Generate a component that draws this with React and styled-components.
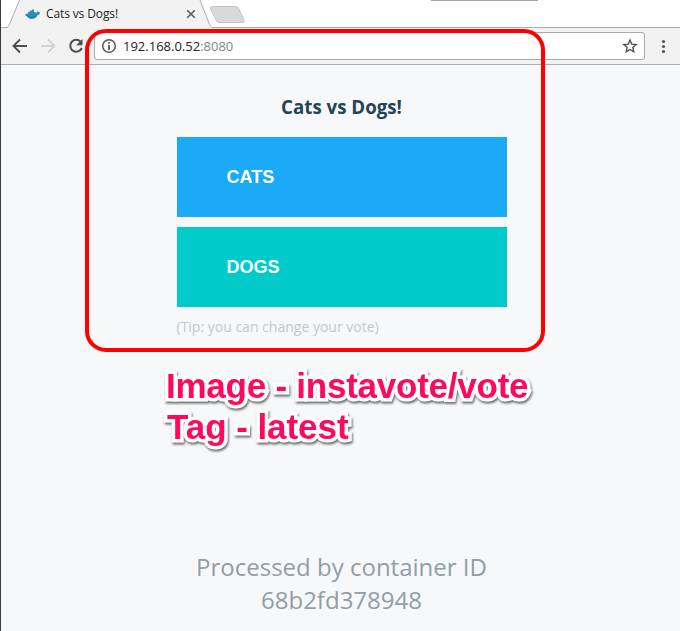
import React from 'react';
import styled, { createGlobalStyle } from 'styled-components';

const GlobalStyle = createGlobalStyle`
  * { box-sizing: border-box; }
  html, body { margin: 0; padding: 0; background: #f7f8f9; overflow: hidden; }
`;

const Window = styled.div`
  position: relative;
  width: 680px;
  height: 631px;
  display: flex;
  flex-direction: column;
  border-left: 1px solid #3c3c3c;
  background: #f7f8f9;
  overflow: hidden;
`;

const TabStrip = styled.header`
  position: relative;
  height: 28px;
  flex: none;
  display: flex;
  padding-left: 24px;
  background: #fff;
`;

const StripShapes = styled.svg`
  position: absolute;
  left: 0;
  top: 0;
`;

const Tab = styled.div`
  position: relative;
  width: 171px;
  height: 28px;
  display: flex;
  align-items: center;
`;

const TabTitle = styled.span`
  flex: 1;
  margin-left: 6px;
  font: 12px/16px 'Open Sans', sans-serif;
  letter-spacing: -0.12px;
  color: #222;
`;

const Toolbar = styled.nav`
  height: 37px;
  flex: none;
  display: flex;
  align-items: center;
  padding-left: 10px;
  background: #f2f2f2;
  border-bottom: 1px solid #adb0b2;
`;

const NavIcon = styled.svg`
  flex: none;
  width: 18px;
  height: 18px;
  margin-right: ${(p) => p.$gap || 0}px;
`;

const AddressBar = styled.div`
  width: 551px;
  height: 28px;
  flex: none;
  display: flex;
  align-items: center;
  padding: 0 6px;
  margin-right: 9px;
  background: #fff;
  border: 1px solid #a9a9a9;
  border-radius: 3px;
`;

const Address = styled.span`
  flex: 1;
  margin-left: 6px;
  font: 13px/18px 'Open Sans', sans-serif;
  color: #222;
`;

const Port = styled.span`
  color: #858585;
`;

const Page = styled.main`
  flex: 1;
  display: flex;
  flex-direction: column;
  align-items: center;
  padding: 27px 0 0 2px;
`;

const Heading = styled.h1`
  margin: 0 0 15px;
  font: 700 18.7px/30px 'Open Sans', sans-serif;
  color: #254356;
`;

const Choices = styled.div`
  width: 330px;
  display: flex;
  flex-direction: column;
  gap: 10px;
`;

const VoteButton = styled.button`
  height: 80px;
  padding: 0 0 0 50px;
  border: 0;
  background: ${(p) => p.$color};
  color: #fff;
  text-align: left;
  font: 700 18px/20px 'Liberation Sans', Arial, sans-serif;
`;

const Tip = styled.p`
  width: 330px;
  margin: 10px 0 0;
  font: 14px/20px 'Open Sans', sans-serif;
  color: #c0c9ce;
`;

const Hostname = styled.footer`
  margin-top: auto;
  margin-bottom: 15px;
  text-align: center;
  font: 24px/33px 'Open Sans', sans-serif;
  color: #8f9ea8;
`;

const Highlight = styled.div`
  position: absolute;
  left: 84px;
  top: 29px;
  width: 460px;
  height: 323px;
  border: 4px solid #f00;
  border-radius: 21px;
  pointer-events: none;
`;

const Note = styled.div`
  position: absolute;
  left: 165px;
  top: 365px;
  font: 700 35px/41px 'Liberation Sans', Arial, sans-serif;
  color: #ff0a5b;
  white-space: nowrap;
  -webkit-text-stroke: 7px #fff;
  paint-order: stroke fill;
  stroke-linejoin: round;
  filter: drop-shadow(1px 2px 1.2px rgba(0, 0, 0, 0.55));
`;

const NoteLine = styled.div`
  padding-left: ${(p) => p.$indent || 0}px;
  letter-spacing: ${(p) => p.$spacing || 0}px;
`;

export default function App() {
  return (
    <Window>
      <GlobalStyle />
      <TabStrip>
        <StripShapes width="679" height="28">
          <path d="M0 27.5H679" stroke="#a9adb0" />
          <path d="M6.5 28 C8 27 8 26 9 23 L18.5 0 H199 L208 23 C209 26 209 27.5 212 27.5 V28 Z" fill="#f2f2f2" />
          <path d="M0 27.5 H5 C7.5 27.5 7.5 26 9 23 L18.5 0 M199 0 L208 23 C209.5 26.5 210 27.5 213 27.5" fill="none" stroke="#a9adb0" />
          <path d="M212 6.5 H235 Q237 6.5 238 9 L243 20 Q244 22.5 241 22.5 H218 Q216 22.5 215 20 L209.5 9 Q208.5 6.5 212 6.5Z" fill="#d8d9da" stroke="#c2c4c5" />
          <path d="M430 0.5H537" stroke="#a3a3a3" />
        </StripShapes>
        <Tab>
          <svg width="15" height="14" viewBox="0 0 15 14">
            <path d="M0.5 7 L3 6.5 V4.8 H5 V3.4 H7 V2.4 H9 V4.8 L10.500 5.600 L12 5.500 L12.800 3.600 L13.500 5 L15 5.200 L14.500 7.200 L12.500 8.300 C11.500 10.800 9.500 12 7 12 C4.500 12 3 11 2.200 9.500 L0.500 8.800Z" fill="#258fb8" />
            <path d="M3.500 6.500 H9.500 M5.500 4.500 H8.500" stroke="#5c8792" />
            <path d="M3 9 C5 11 8 11 11 8.500" stroke="#1678a0" fill="none" />
          </svg>
          <TabTitle>Cats vs Dogs!</TabTitle>
          <svg width="10" height="10" viewBox="0 0 10 10">
            <path d="M1.2 1.2L8.800 8.800M8.800 1.200L1.200 8.800" stroke="#5a5a5a" strokeWidth="1.600" />
          </svg>
        </Tab>
      </TabStrip>
      <Toolbar>
        <NavIcon $gap={11} viewBox="0 0 18 18">
          <path d="M16 9H3M9 2.500L2.500 9L9 15.500" fill="none" stroke="#4e4e4e" strokeWidth="1.900" />
        </NavIcon>
        <NavIcon $gap={9} viewBox="0 0 18 18">
          <path d="M1 9H14M8 2.500L14.500 9L8 15.500" fill="none" stroke="#d2d2d2" strokeWidth="1.900" />
        </NavIcon>
        <NavIcon $gap={9} viewBox="0 0 18 18">
          <path d="M13.500 4.500A6 6 0 1 0 14.800 11" fill="none" stroke="#4e4e4e" strokeWidth="2" />
          <path d="M15.500 2V8.300H9.200Z" fill="#4e4e4e" />
        </NavIcon>
        <AddressBar>
          <svg width="16" height="16" viewBox="0 0 16 16">
            <circle cx="8" cy="8" r="6.300" fill="none" stroke="#555" strokeWidth="1.500" />
            <path d="M8 7V12M8 4V5.700" stroke="#555" strokeWidth="1.800" />
          </svg>
          <Address>192.168.0.52<Port>:8080</Port></Address>
          <svg width="16" height="16" viewBox="0 0 16 16">
            <path d="M8 2L9.700 6.100L14.200 6.500L10.800 9.400L11.800 13.800L8 11.500L4.200 13.800L5.200 9.400L1.800 6.500L6.300 6.100Z" fill="none" stroke="#505050" strokeWidth="1.400" />
          </svg>
        </AddressBar>
        <NavIcon viewBox="0 0 18 18">
          <g fill="#555">
            <circle cx="9.500" cy="4.500" r="1.600" />
            <circle cx="9.500" cy="9.500" r="1.600" />
            <circle cx="9.500" cy="14.500" r="1.600" />
          </g>
        </NavIcon>
      </Toolbar>
      <Page>
        <Heading>Cats vs Dogs!</Heading>
        <Choices>
          <VoteButton $color="#1aaaf8">CATS</VoteButton>
          <VoteButton $color="#00cbca">DOGS</VoteButton>
        </Choices>
        <Tip>(Tip: you can change your vote)</Tip>
        <Hostname>
          Processed by container ID
          <br />
          68b2fd378948
        </Hostname>
      </Page>
      <Highlight />
      <Note>
        <NoteLine $spacing={-0.24}>Image - instavote/vote</NoteLine>
        <NoteLine $indent={1} $spacing={-0.05}>Tag - latest</NoteLine>
      </Note>
    </Window>
  );
}
